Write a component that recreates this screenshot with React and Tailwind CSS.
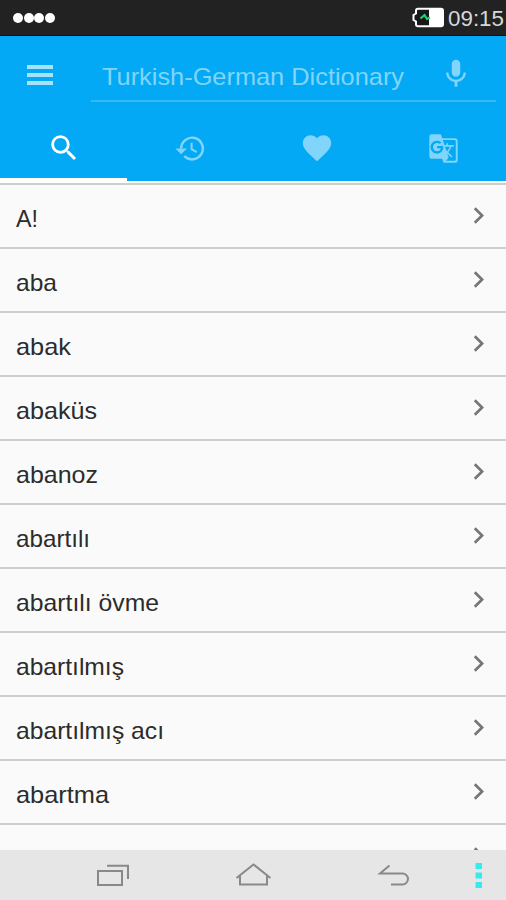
import { useState } from "react";
import {
  MdChevronRight,
  MdFavorite,
  MdGTranslate,
  MdMic,
  MdSearch,
} from "react-icons/md";

const words = [
  { text: "A!", width: 22 },
  { text: "aba", width: 41 },
  { text: "abak", width: 55 },
  { text: "abaküs", width: 81 },
  { text: "abanoz", width: 82 },
  { text: "abartılı", width: 74 },
  { text: "abartılı övme", width: 143 },
  { text: "abartılmış", width: 108 },
  { text: "abartılmış acı", width: 148 },
  { text: "abartma", width: 93 },
  { text: "abartmak", width: 106 },
];

// clock with a solid arrow head on the left
const HistoryIcon = ({ size, className }) => (
  <svg width={size} height={size} viewBox="0 0 24 24" fill="none" stroke="currentColor" className={className}>
    <path d="M5.200 12a7.900 7.900 0 1 1 2.300 5.600" strokeWidth="1.800" />
    <path d="M12.800 7.800v4.600l3.700 2.200" strokeWidth="1.500" />
    <path d="M1 12h8.400l-4.200 4.200Z" fill="currentColor" stroke="none" />
  </svg>
);

const tabs = [
  { id: "search", Icon: MdSearch, size: 34 },
  { id: "history", Icon: HistoryIcon, size: 33 },
  { id: "favorites", Icon: MdFavorite, size: 34 },
  { id: "translate", Icon: MdGTranslate, size: 31 },
];

// svg text keeps every label at its own measured width
const Label = ({ text, width, className }) => (
  <svg width={width + 4} height="34" className={`block overflow-visible ${className}`}>
    <text x="0" y="25" textLength={width} lengthAdjust="spacingAndGlyphs" fill="currentColor">
      {text}
    </text>
  </svg>
);

const StatusBar = () => (
  <div className="flex h-9 shrink-0 items-center justify-between border-b border-[#111] bg-[#222] pl-[13px]">
    <div className="flex gap-[0.5px]">
      {[0, 1, 2, 3].map((i) => (
        <span key={i} className="h-[10px] w-[10px] rounded-full bg-white" />
      ))}
    </div>
    <div className="flex items-center gap-[4px] text-[#d8d8d8]">
      <svg width="33" height="21" viewBox="0 0 33 21" fill="none">
        <path
          d="M7 1.800h23a2 2 0 0 1 2 2v13.400a2 2 0 0 1-2 2H7a2 2 0 0 1-2-2V14.500L2.500 13V8L5 6.500V3.800a2 2 0 0 1 2-2Z"
          fill="#181818"
          stroke="#fff"
          strokeWidth="2"
        />
        <path d="M18 2h12a2 2 0 0 1 2 2v13a2 2 0 0 1-2 2H18Z" fill="#fff" />
        <path d="M9.500 11.500 13.500 8l2.500 4 3-1.500" stroke="#20d878" strokeWidth="2" />
      </svg>
      <Label text="09:15" width={56} className="-mr-[2px] text-[22px]" />
    </div>
  </div>
);

const NavBar = () => (
  <div className="flex h-[50px] shrink-0 items-center bg-[#e6e6e6] text-[#898989]">
    <svg width="506" height="50" viewBox="0 0 506 50" fill="none" stroke="currentColor" strokeWidth="2">
      <path d="M98 21h24v14H98ZM107 15.800h21V29" />
      <path d="M236.500 28 253.500 14.500 270.500 28M240 26v8.500h27V26" />
      <path d="M389.500 15.500 380 23.500h22.500a5.500 5.500 0 0 1 0 11H391" />
      <path d="M475.500 13h6.500v6h-6.500zM475.500 22.500h6.500v6h-6.500zM475.500 32h6.500v6h-6.500z" fill="#35ebf2" stroke="none" />
    </svg>
  </div>
);

const App = () => {
  const [active, setActive] = useState("search");

  return (
    <div className="flex h-[900px] w-[506px] flex-col overflow-hidden bg-[#fafafa] font-['Liberation_Sans',sans-serif]">
      <StatusBar />

      <header className="flex h-[145px] shrink-0 flex-col bg-[#03a9f4]">
        <div className="flex h-[79px] items-start pl-[27px] pr-[10px]">
          <button className="mt-[29px] flex w-[26px] flex-col gap-1">
            <span className="h-[4px] w-full bg-[#a9e1fb]" />
            <span className="h-[4px] w-full bg-[#a9e1fb]" />
            <span className="h-[4px] w-full bg-[#a9e1fb]" />
          </button>
          <div className="ml-[38px] mt-[20px] flex h-[46px] flex-1 items-start border-b-2 border-[#35baf6] pl-[11px] text-[#81d4fa]">
            <Label text="Turkish-German Dictionary" width={302} className="mt-[4px] text-[24px]" />
            <MdMic size={34} className="ml-[31px] mt-px" />
          </div>
        </div>

        <nav className="grid flex-1 grid-cols-4">
          {tabs.map(({ id, Icon, size }) => (
            <button
              key={id}
              onClick={() => setActive(id)}
              className={`flex items-start justify-center border-b-[3px] pt-4 ${
                active === id ? "border-white text-white" : "border-transparent text-[#81d4fa]"
              }`}
            >
              <span className="ml-px flex h-[34px] items-center">
                <Icon size={size} />
              </span>
            </button>
          ))}
        </nav>
      </header>

      <main className="min-h-0 flex-1 overflow-hidden border-t-2 border-white">
        <ul className="border-t-2 border-[#cccecd]">
          {words.map(({ text, width }) => (
            <li
              key={text}
              className="flex h-16 items-start justify-between border-b-2 border-[#cccecd] pl-4 pr-[11px]"
            >
              <Label text={text} width={width} className="mt-[17px] text-[24px] text-[#2c2c2c]" />
              <MdChevronRight size={33} className="mt-[14px] text-[#777]" />
            </li>
          ))}
        </ul>
      </main>

      <NavBar />
    </div>
  );
};

export default App;
